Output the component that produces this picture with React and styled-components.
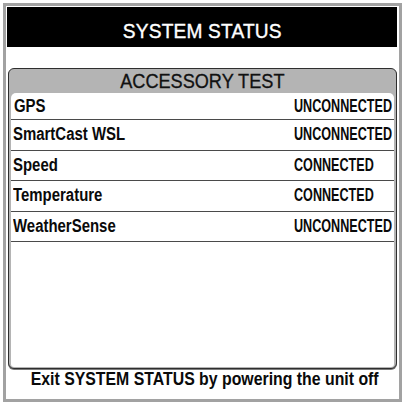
import React from 'react'
import styled, { createGlobalStyle } from 'styled-components'

const GlobalStyle = createGlobalStyle`
  html, body {
    margin: 0;
    padding: 0;
    background: #ffffff;
  }
  body {
    font-family: "Liberation Sans", Arial, sans-serif;
  }
`

const accessories = [
  { name: 'GPS', status: 'UNCONNECTED' },
  { name: 'SmartCast WSL', status: 'UNCONNECTED' },
  { name: 'Speed', status: 'CONNECTED' },
  { name: 'Temperature', status: 'CONNECTED' },
  { name: 'WeatherSense', status: 'UNCONNECTED' },
]

const Frame = styled.div`
  box-sizing: border-box;
  margin: 3px;
  width: 399px;
  height: 399px;
  border: 3px solid #a2a2a2;
  background: #ffffff;
  padding: 1px 2px 0 1px;
  display: flex;
  flex-direction: column;
`

const TitleBar = styled.header`
  box-sizing: border-box;
  height: 40px;
  background: #000000;
  color: #ffffff;
  padding-top: 12px;
  text-align: center;
`

const Squeeze = styled.span`
  display: inline-block;
  white-space: nowrap;
  transform: scaleX(${p => p.$sx || 1});
  transform-origin: ${p => p.$origin || 'center'};
`

const TitleText = styled(Squeeze)`
  font-size: 21px;
  line-height: normal;
  letter-spacing: 0.2px;
  -webkit-text-stroke: 0.4px #ffffff;
`

const Panel = styled.section`
  box-sizing: border-box;
  margin: 21px 0 0 1px;
  height: 301px;
  border: 1px solid #2e2e2e;
  border-radius: 6px;
  background: #b4b4b4;
  padding: 0 2px 1px 2px;
  display: flex;
  flex-direction: column;
  box-shadow: 0 1px 0 #7a7a7a;
`

const PanelTitle = styled.div`
  box-sizing: border-box;
  height: 24px;
  padding-top: 1px;
  text-align: center;
  color: #111111;
`

const PanelTitleText = styled(Squeeze)`
  font-size: 19.5px;
  line-height: normal;
  -webkit-text-stroke: 0.3px #111111;
`

const List = styled.div`
  flex: 1;
  background: #ffffff;
  border-radius: 5px 5px 3px 3px;
  display: flex;
  flex-direction: column;
`

const Row = styled.div`
  box-sizing: border-box;
  height: 30.5px;
  border-bottom: 1px solid #4a4a4a;
  display: grid;
  grid-template-columns: 281px 1fr;
  align-items: center;
  padding-left: 2px;
  color: #0a0a0a;
  font-weight: 700;
  font-size: 18px;

  &:first-child {
    height: 27px;
    padding-left: 3px;
    grid-template-columns: 280px 1fr;
  }
`

const Footer = styled.footer`
  box-sizing: border-box;
  flex: 1;
  text-align: center;
  color: #0a0a0a;
`

const FooterText = styled(Squeeze)`
  font-size: 18px;
  font-weight: 700;
  line-height: normal;
`

export default function App() {
  return (
    <>
      <GlobalStyle />
      <Frame>
        <TitleBar>
          <TitleText $sx={0.91}>SYSTEM STATUS</TitleText>
        </TitleBar>
        <Panel>
          <PanelTitle>
            <PanelTitleText $sx={0.93}>ACCESSORY TEST</PanelTitleText>
          </PanelTitle>
          <List>
            {accessories.map(a => (
              <Row key={a.name}>
                <Squeeze $sx={0.83} $origin="left">{a.name}</Squeeze>
                <Squeeze $sx={0.7} $origin="left">{a.status}</Squeeze>
              </Row>
            ))}
          </List>
        </Panel>
        <Footer>
          <FooterText $sx={0.88}>Exit SYSTEM STATUS by powering the unit off</FooterText>
        </Footer>
      </Frame>
    </>
  )
}
